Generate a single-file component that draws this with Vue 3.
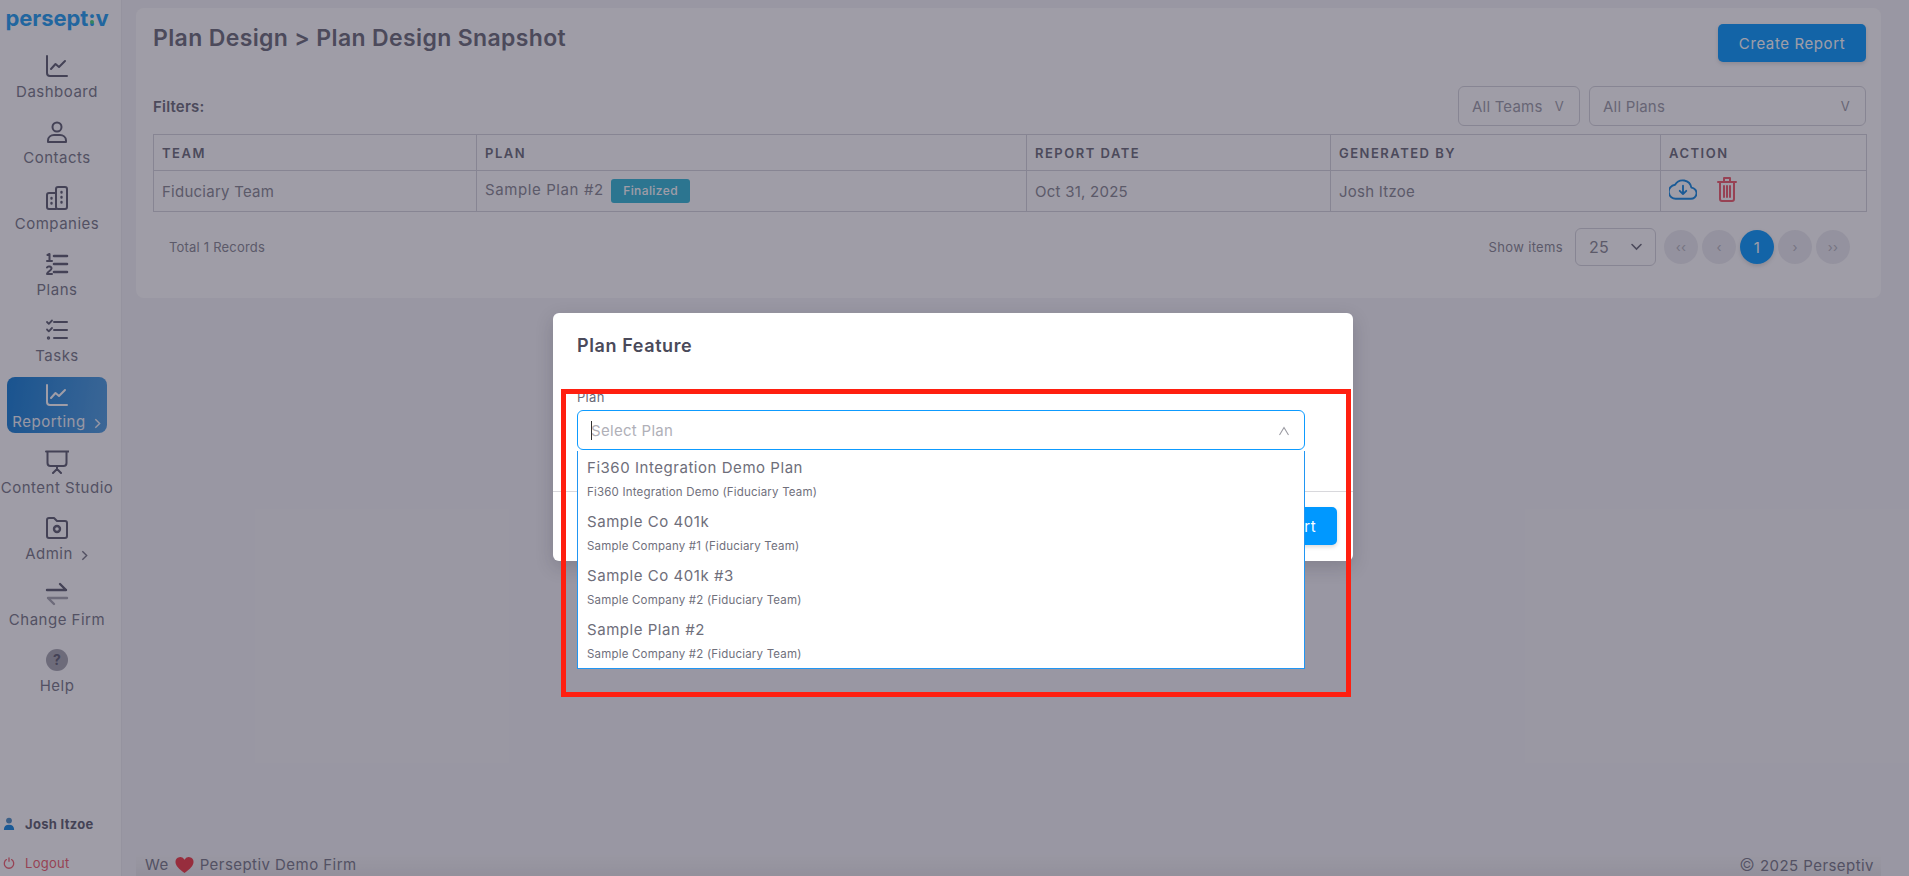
<script setup>
const nav = [
  { label: 'Dashboard', icon: 'chart' },
  { label: 'Contacts', icon: 'user' },
  { label: 'Companies', icon: 'company' },
  { label: 'Plans', icon: 'numbered' },
  { label: 'Tasks', icon: 'tasks' },
  { label: 'Reporting', icon: 'chart', active: true, more: true },
  { label: 'Content Studio', icon: 'present' },
  { label: 'Admin', icon: 'folder', more: true },
  { label: 'Change Firm', icon: 'swap' },
  { label: 'Help', icon: 'help' }
]
const columns = [
  { name: 'TEAM', width: '323px' },
  { name: 'PLAN', width: '550px' },
  { name: 'REPORT DATE', width: '304px' },
  { name: 'GENERATED BY', width: '330px' },
  { name: 'ACTION', width: '206px' }
]
const options = [
  { name: 'Fi360 Integration Demo Plan', sub: 'Fi360 Integration Demo (Fiduciary Team)' },
  { name: 'Sample Co 401k', sub: 'Sample Company #1 (Fiduciary Team)' },
  { name: 'Sample Co 401k #3', sub: 'Sample Company #2 (Fiduciary Team)' },
  { name: 'Sample Plan #2', sub: 'Sample Company #2 (Fiduciary Team)' }
]
const pages = [
  { t: '‹‹' }, { t: '‹' }, { t: '1', on: true }, { t: '›' }, { t: '››' }
]
</script>

<template>
  <div class="page">
    <aside class="side">
      <div class="logo">persept<span class="logo-i">:</span>v</div>
      <nav class="nav">
        <a v-for="n in nav" :key="n.label" class="item" :class="{ active: n.active }">
          <svg class="ico" viewBox="0 0 24 24" fill="none" stroke="currentColor" stroke-width="2" stroke-linecap="round" stroke-linejoin="round">
            <template v-if="n.icon === 'chart'">
              <path d="M2 2v17a3 3 0 0 0 3 3h17" />
              <path d="M6 15l4.500-5 3.500 3 6-6" />
            </template>
            <template v-else-if="n.icon === 'user'">
              <circle cx="12" cy="7" r="4.500" />
              <path d="M3 22v-1.500c0-3.500 3-5.500 6-5.500h6c3 0 6 2 6 5.500V22z" />
            </template>
            <template v-else-if="n.icon === 'company'">
              <rect x="11" y="1" width="11" height="22" rx="2" />
              <path d="M11 7H4a2 2 0 0 0-2 2v12a2 2 0 0 0 2 2h7" />
              <path d="M16.500 6v.5M16.500 11v.5M16.500 16v.5M6.500 12v.5M6.500 17v.5" stroke-width="2.400" />
            </template>
            <template v-else-if="n.icon === 'numbered'">
              <path d="M9 4h13M9 12h13M9 20h13" stroke-width="2.600" />
              <path d="M2.500 3L4.500 2v7M2 9h5M2 15.500c.5-1.500 4.500-1.500 4.500 1 0 2-4 3-4.500 5.500h5" stroke-width="2" />
            </template>
            <template v-else-if="n.icon === 'tasks'">
              <path d="M9 4h13M9 12h13M9 20h13" />
              <path d="M2 4l1.800 1.800L7 2.500M2 11.500l1.800 1.800L7 10" stroke-width="1.800" />
              <circle cx="3.500" cy="20" r=".7" />
            </template>
            <template v-else-if="n.icon === 'present'">
              <path d="M1 1.500h23" />
              <path d="M2.500 2v11a3 3 0 0 0 3 3h13a3 3 0 0 0 3-3V2" />
              <path d="M12 16v3M8 23l4-4 4 4" />
            </template>
            <template v-else-if="n.icon === 'folder'">
              <path d="M2 4a2 2 0 0 1 2-2h5l3 3h8a2 2 0 0 1 2 2v13a2 2 0 0 1-2 2H4a2 2 0 0 1-2-2z" />
              <circle cx="12" cy="13" r="3" stroke-width="2.400" />
            </template>
            <template v-else-if="n.icon === 'swap'">
              <path d="M2 8h19M15 2l6 6" stroke-width="2.400" />
              <path class="dim" d="M22 16H3M9 22l-6-6" stroke-width="2.400" />
            </template>
            <template v-else>
              <circle cx="12" cy="12" r="11" fill="currentColor" stroke="none" class="dim" />
              <text x="12" y="17" text-anchor="middle" class="q">?</text>
            </template>
          </svg>
          <span class="lab">{{ n.label }}<svg v-if="n.more" class="more" viewBox="0 0 8 12" fill="none" stroke="currentColor" stroke-width="1.300"><path d="M2 2l4 4-4 4" /></svg></span>
        </a>
      </nav>
      <div class="who">
        <svg class="who-ico" viewBox="0 0 14 16"><circle cx="7" cy="4" r="3.400" fill="#4b8ec4" /><path d="M1 15c0-4 2-6 6-6s6 2 6 6z" fill="#0d86e0" /></svg>
        <b>Josh Itzoe</b>
      </div>
      <div class="out">
        <svg class="who-ico" viewBox="0 0 14 14" fill="none" stroke="#f05a68" stroke-width="1.500" stroke-linecap="round"><path d="M4 3a5.500 5.500 0 1 0 6 0M7 1v4" /></svg>
        <span>Logout</span>
      </div>
    </aside>

    <main class="main">
      <section class="card">
        <header class="head">
          <h1>Plan Design &gt; Plan Design Snapshot</h1>
          <button class="btn">Create Report</button>
        </header>
        <div class="filters">
          <strong>Filters:</strong>
          <div class="fsel teams">All Teams<span class="v">V</span></div>
          <div class="fsel plans">All Plans<span class="v">V</span></div>
        </div>
        <table class="tbl">
          <colgroup>
            <col v-for="c in columns" :key="c.name" :style="{ width: c.width }" />
          </colgroup>
          <thead>
            <tr><th v-for="c in columns" :key="c.name">{{ c.name }}</th></tr>
          </thead>
          <tbody>
            <tr>
              <td>Fiduciary Team</td>
              <td><span class="pl">Sample Plan #2</span> <span class="tag">Finalized</span></td>
              <td>Oct 31, 2025</td>
              <td>Josh Itzoe</td>
              <td class="acts">
                <svg class="dl" viewBox="0 0 30 26" fill="none" stroke="#0d86e0" stroke-width="2" stroke-linecap="round" stroke-linejoin="round">
                  <path d="M8 24h15a6 6 0 0 0 1-12A9.500 9.500 0 0 0 6.500 9 7.500 7.500 0 0 0 8 24z" />
                  <path d="M15 10v9M11.500 15.500L15 19l3.500-3.500" />
                </svg>
                <svg class="tr" viewBox="0 0 20 26" fill="none" stroke="#f05a68" stroke-width="2" stroke-linecap="round" stroke-linejoin="round">
                  <path d="M1 6h18M7 5V2h6v3M3 6v17a2 2 0 0 0 2 2h10a2 2 0 0 0 2-2V6M7 10v11M10 10v11M13 10v11" />
                </svg>
              </td>
            </tr>
          </tbody>
        </table>
        <div class="pager">
          <span class="total">Total 1 Records</span>
          <span class="show">Show items</span>
          <div class="size">25
            <svg viewBox="0 0 12 8" fill="none" stroke="currentColor" stroke-width="1.600" stroke-linecap="round"><path d="M1.500 1.500L6 6l4.500-4.500" /></svg>
          </div>
          <div class="pages">
            <span v-for="(p, i) in pages" :key="i" class="pg" :class="{ on: p.on }">{{ p.t }}</span>
          </div>
        </div>
      </section>
      <footer class="foot">
        <span class="we">We
          <svg class="heart" viewBox="0 0 20 18"><path d="M10 17.500C4 13 .5 9.500.5 5.500A5 5 0 0 1 10 3.500a5 5 0 0 1 9.500 2c0 4-3.500 7.500-9.500 12z" fill="#f0343e" /></svg>
          Perseptiv Demo Firm</span>
        <span class="copy"><span class="c">©</span> 2025 Perseptiv</span>
      </footer>
    </main>

    <div class="overlay"></div>

    <div class="modal">
      <h2>Plan Feature</h2>
      <div class="body">
        <label>Plan</label>
        <div class="input">
          <span class="caret"></span>
          <span class="ph">Select Plan</span>
          <svg class="up" viewBox="0 0 12 10" fill="none" stroke="currentColor" stroke-width="1.100"><path d="M1.500 9L6 1.500 10.500 9" /></svg>
        </div>
      </div>
      <div class="mfoot">
        <button class="mbtn">Create Report</button>
      </div>
      <ul class="list">
        <li v-for="o in options" :key="o.name">
          <span class="oname">{{ o.name }}</span>
          <span class="osub">{{ o.sub }}</span>
        </li>
      </ul>
    </div>

    <div class="mark"></div>
  </div>
</template>

<style scoped>
.page {
  position: relative;
  display: flex;
  width: 1909px;
  height: 876px;
  overflow: hidden;
  background: #f5f5f7;
  color: #686976;
  font-family: Inter, "Noto Sans", sans-serif;
}
.side {
  box-sizing: border-box;
  width: 122px;
  flex: none;
  display: flex;
  flex-direction: column;
  align-items: center;
  padding-right: 7px;
  background: #fff;
  border-right: 1px solid #ededf0;
}
.logo {
  height: 38px;
  padding-top: 3px;
  box-sizing: border-box;
  font-size: 22px;
  font-weight: 700;
  letter-spacing: -0.1px;
  color: #1a9cf0;
  line-height: 30px;
}
.logo-i { position: relative; }
.logo-i::after {
  content: "";
  position: absolute;
  left: 50%;
  top: 15px;
  width: 4px;
  height: 4px;
  margin-left: -2px;
  border-radius: 50%;
  background: #3fd17a;
}
.nav {
  display: flex;
  flex-direction: column;
  align-items: center;
  flex: 1;
  padding-top: 10px;
}
.item {
  box-sizing: border-box;
  width: 100px;
  height: 66px;
  display: flex;
  flex-direction: column;
  align-items: center;
  padding-top: 6px;
  border-radius: 8px;
  color: #595a6c;
}
.item.active {
  height: 56px;
  margin: -1px 0 11px;
  width: 100px;
  color: #fff;
  background: linear-gradient(100deg, #0d7ad4, #4a9ce0);
}
.ico { width: 24px; height: 24px; flex: none; }
.dim { opacity: 0.55; }
.q { font: 700 14px Inter, sans-serif; fill: #595a6c; stroke: none; }
.lab {
  margin-top: 4px;
  display: flex;
  align-items: center;
  gap: 7px;
  font-size: 15px;
  line-height: 20px;
  white-space: nowrap;
  letter-spacing: 0.5px;
  color: #757684;
}
.active .lab { margin-top: 5px; color: #f2f5fa; }
.more { width: 9px; height: 13px; margin-top: 2px; }
.who, .out {
  align-self: stretch;
  display: flex;
  align-items: center;
  gap: 10px;
  padding-left: 3px;
  letter-spacing: 0.3px;
}
.who { height: 20px; font-size: 13px; color: #5a5b6c; }
.who b { font-weight: 700; }
.out { height: 20px; margin: 19px 0 3px; font-size: 13px; color: #f05a68; }
.who-ico { width: 12px; height: 14px; flex: none; }

.main {
  flex: 1;
  min-width: 0;
  display: flex;
  flex-direction: column;
  padding: 8px 28px 0 14px;
}
.card {
  box-sizing: border-box;
  height: 290px;
  padding: 16px 15px 0 17px;
  background: #fff;
  border-radius: 8px;
}
.head {
  display: flex;
  justify-content: space-between;
  align-items: flex-start;
}
h1 {
  margin: 0;
  font-size: 23px;
  font-weight: 600;
  line-height: 28px;
  color: #686976;
  letter-spacing: 0.36px;
}
.btn {
  width: 148px;
  height: 38px;
  border: 0;
  border-radius: 5px;
  background: #0098ff;
  color: #fff;
  font: 400 15px Inter, sans-serif;
  letter-spacing: 0.6px;
  box-shadow: 0 2px 4px rgba(0, 0, 0, 0.15);
}
.filters {
  display: flex;
  align-items: center;
  margin-top: 24px;
  height: 40px;
  gap: 9px;
}
.filters strong { flex: 1; font-size: 15px; font-weight: 600; letter-spacing: 0.2px; color: #686976; }
.fsel {
  box-sizing: border-box;
  height: 40px;
  display: flex;
  align-items: center;
  justify-content: space-between;
  padding: 0 15px 0 13px;
  border: 1px solid #d4d4da;
  border-radius: 6px;
  font-size: 15px;
  letter-spacing: 0.2px;
  color: #9a9aa5;
}
.teams { width: 122px; }
.plans { width: 277px; }
.v { font-size: 13px; }
.tbl {
  margin-top: 8px;
  width: 1713px;
  border-collapse: collapse;
  table-layout: fixed;
  font-size: 15px;
  letter-spacing: 0.25px;
}
.tbl th, .tbl td { border: 1px solid #d4d4da; padding: 0 8px; text-align: left; }
.tbl th { height: 35px; font-size: 13px; font-weight: 600; letter-spacing: 1.5px; color: #686976; }
.tbl td { height: 40px; color: #85858f; }
.pl { letter-spacing: 0.6px; }
.tag {
  display: inline-block;
  margin-left: 3px;
  padding: 0 12px;
  height: 24px;
  line-height: 24px;
  border-radius: 3px;
  background: #2fb6d6;
  color: #fff;
  font-size: 12px;
  font-weight: 500;
  letter-spacing: 0.4px;
}
.acts { line-height: 0; }
.dl { width: 28px; height: 25px; vertical-align: middle; margin-top: -5px; }
.tr { width: 20px; height: 26px; margin-left: 20px; vertical-align: middle; margin-top: -4px; }
.pager {
  display: flex;
  align-items: center;
  margin-top: 16px;
  height: 38px;
  padding-left: 16px;
  font-size: 13px;
  letter-spacing: 0.2px;
  color: #85858f;
}
.total { flex: 1; }
.show { margin-right: 12px; letter-spacing: 0.35px; }
.size {
  box-sizing: border-box;
  width: 81px;
  height: 38px;
  display: flex;
  align-items: center;
  justify-content: space-between;
  padding: 0 12px 0 13px;
  border: 1px solid #d4d4da;
  border-radius: 6px;
  font-size: 16px;
  color: #85858f;
}
.size svg { width: 13px; height: 8px; color: #686976; }
.pages { display: flex; gap: 4px; margin: 0 16px 0 8px; }
.pg {
  width: 34px;
  height: 34px;
  border-radius: 50%;
  background: #ececf0;
  color: #b4b4bc;
  display: flex;
  align-items: center;
  justify-content: center;
  font-size: 13px;
}
.pg.on { background: #0098ff; color: #fff; box-shadow: 0 2px 4px rgba(0, 0, 0, 0.15); font-size: 15px; }
.foot {
  margin-top: auto;
  height: 22px;
  display: flex;
  justify-content: space-between;
  align-items: center;
  padding: 0 0 0 9px;
  font-size: 15px;
  line-height: 20px;
  letter-spacing: 0.45px;
  color: #757684;
  background: linear-gradient(rgba(0, 0, 0, 0), rgba(0, 0, 0, 0.05));
}
.we { display: flex; align-items: center; gap: 6px; }
.heart { width: 19px; height: 18px; }
.copy { margin-right: 7px; }
.c { font-size: 17px; font-weight: 300; }
.overlay {
  position: absolute;
  inset: 0;
  background: rgba(43, 38, 60, 0.45);
}
.modal {
  position: absolute;
  left: 553px;
  top: 313px;
  width: 800px;
  height: 248px;
  background: #fff;
  border-radius: 6px;
  box-shadow: 0 6px 18px rgba(30, 25, 45, 0.18);
}
h2 {
  margin: 0;
  padding: 22px 24px 0;
  height: 62px;
  box-sizing: border-box;
  font-size: 18px;
  font-weight: 600;
  line-height: 22px;
  letter-spacing: 0.6px;
  color: #4a4a5a;
}
.body { padding: 13px 24px 0; height: 116px; box-sizing: border-box; }
label { display: block; height: 22px; font-size: 13px; line-height: 18px; letter-spacing: 0.3px; color: #6a6a78; }
.input {
  position: relative;
  box-sizing: border-box;
  width: 728px;
  height: 40px;
  padding-left: 13px;
  display: flex;
  align-items: center;
  border: 1px solid #0d9bff;
  border-radius: 6px;
}
.caret { position: absolute; left: 13px; top: 10px; width: 1px; height: 19px; background: #333; }
.ph { font-size: 15px; letter-spacing: 0.3px; color: #b0b0b8; }
.up { position: absolute; right: 14px; top: 15px; width: 12px; height: 10px; color: #9a9aa2; }
.mfoot {
  box-sizing: border-box;
  height: 70px;
  border-top: 1px solid #d8d8dc;
  display: flex;
  justify-content: flex-end;
  padding: 15px 16px 0 0;
}
.mbtn {
  width: 148px;
  height: 38px;
  border: 0;
  border-radius: 5px;
  background: #0098ff;
  color: #fff;
  font: 400 15px Inter, sans-serif;
  letter-spacing: 0.6px;
  box-shadow: 0 2px 4px rgba(0, 0, 0, 0.15);
}
.list {
  position: absolute;
  left: 24px;
  top: 138px;
  box-sizing: border-box;
  width: 728px;
  height: 218px;
  margin: 0;
  padding: 0;
  list-style: none;
  background: #fff;
  border: 1px solid #2196f3;
  border-top: 0;
}
.list li {
  height: 54px;
  padding-left: 9px;
  box-sizing: border-box;
  display: flex;
  flex-direction: column;
}
.oname { font-size: 15px; line-height: 20px; padding-top: 7px; letter-spacing: 0.54px; color: #6e6e7a; }
.osub { font-size: 11.500px; line-height: 14px; margin-top: 7px; letter-spacing: 0.19px; color: #70707c; }
.mark {
  position: absolute;
  left: 561px;
  top: 389px;
  box-sizing: border-box;
  width: 790px;
  height: 308px;
  border: 5px solid #ff1f10;
  pointer-events: none;
}
</style>
